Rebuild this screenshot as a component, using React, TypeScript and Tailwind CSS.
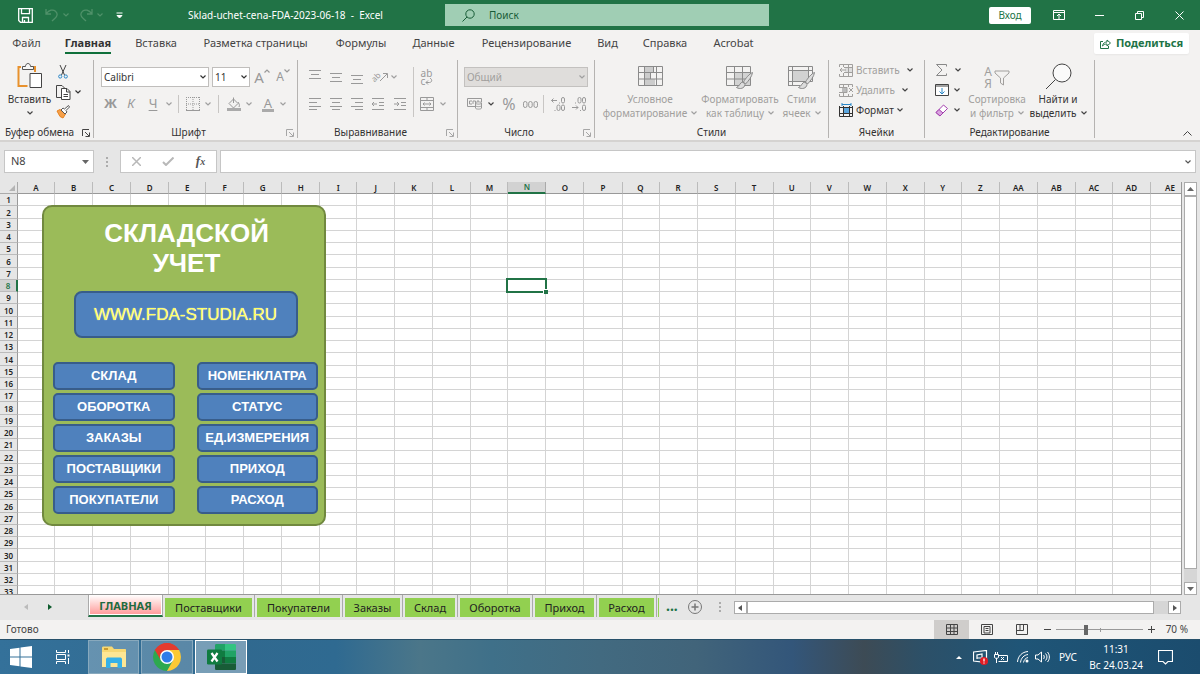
import React from "react";

type IconProps = { className?: string; box?: string; children: React.ReactNode };

function Icon({ className = "size-4", box = "0 0 16 16", children }: IconProps) {
  return (
    <svg className={`${className} shrink-0`} viewBox={box} fill="none" stroke="currentColor" strokeWidth="1" aria-hidden="true">
      {children}
    </svg>
  );
}

function Chevron({ className = "text-[#a0a0a0]" }: { className?: string }) {
  return (
    <svg className={`h-1 w-1.5 shrink-0 ${className}`} viewBox="0 0 6 4" fill="none" stroke="currentColor" strokeWidth="1.2" aria-hidden="true">
      <path d="M.5.5 3 3 5.500.5" />
    </svg>
  );
}

function ToolButton({ label, className, children }: { label: string; className: string; children: React.ReactNode }) {
  return (
    <button type="button" aria-label={label} className={`flex h-5 shrink-0 items-center justify-center ${className}`}>
      {children}
    </button>
  );
}

function Launcher({ dark }: { dark?: boolean }) {
  return (
    <button type="button" aria-label="Параметры группы" className={`absolute right-[3px] top-[3px] ${dark ? "text-[#444]" : "text-[#a6a6a6]"}`}>
      <Icon className="size-2" box="0 0 8 8">
        <path d="M.5 7V.5H7M3 3l4 4M7.500 3.500v4h-4" />
      </Icon>
    </button>
  );
}

function Group({ label, width, launcher, children }: { label: string; width: string; launcher?: "dark" | "light"; children: React.ReactNode }) {
  return (
    <section aria-label={label} className={`flex h-[78px] shrink-0 flex-col border-r border-[#b5b3b1] ${width}`}>
      <div className="flex-1">{children}</div>
      <div className={`relative h-3 text-center text-[10px] leading-3 text-[#333] ${launcher ? "pr-3.5" : ""}`}>
        {label}
        {launcher && <Launcher dark={launcher === "dark"} />}
      </div>
    </section>
  );
}

const VSep = ({ className = "h-5" }: { className?: string }) => <div className={`w-px shrink-0 bg-[#c8c6c4] ${className}`} />;

const tabs = [
  { name: "Файл", width: "w-[53px]" },
  { name: "Главная", width: "w-[70px]" },
  { name: "Вставка", width: "w-[66px]" },
  { name: "Разметка страницы", width: "w-[133px]" },
  { name: "Формулы", width: "w-[78px]" },
  { name: "Данные", width: "w-[67px]" },
  { name: "Рецензирование", width: "w-[119px]" },
  { name: "Вид", width: "w-[43px]" },
  { name: "Справка", width: "w-[72px]" },
  { name: "Acrobat", width: "w-[65px]" },
];

function TitleBar() {
  return (
    <header className="flex h-[30px] shrink-0 items-center bg-[#217346] text-white">
      <div className="flex w-[445px] shrink-0 items-center pl-[18px]">
        <button type="button" aria-label="Сохранить">
          <Icon className="size-[15px]" box="0 0 15 15">
            <path d="M.7.700h13.600v13.600H2.500L.7 12.500zM3.500.7v5h8v-5M4.500 14v-4.500h6V14M6.500 12v2" strokeWidth="1.300" />
          </Icon>
        </button>
        <button type="button" aria-label="Отменить" className="ml-3 flex items-center gap-1 text-[#4f9169]">
          <Icon className="size-[14px]" box="0 0 14 14">
            <path d="M1 1v5h5M1.300 5.700C4 2 8 1 10.500 3.200s2 5-.5 7L7 13" strokeWidth="1.300" />
          </Icon>
          <Chevron className="text-[#4f9169]" />
        </button>
        <button type="button" aria-label="Вернуть" className="ml-2.5 flex items-center gap-1 text-[#4f9169]">
          <Icon className="size-[14px]" box="0 0 14 14">
            <path d="M13 1v5H8M12.700 5.700C10 2 6 1 3.500 3.200s-2 5 .5 7L7 13" strokeWidth="1.300" />
          </Icon>
          <Chevron className="text-[#4f9169]" />
        </button>
        <button type="button" aria-label="Настройка панели" className="ml-[13px]">
          <Icon className="size-[7px]" box="0 0 7 7">
            <path d="M.5 1h6M1 3.500 3.500 6 6 3.500z" fill="currentColor" />
          </Icon>
        </button>
        <h1 className="ml-[65px] whitespace-nowrap text-[10px] leading-4">Sklad-uchet-cena-FDA-2023-06-18&nbsp; -&nbsp; Excel</h1>
      </div>
      <label className="flex h-[22px] w-[324px] shrink-0 items-center gap-3.5 bg-[#a0ceb4] pl-[17px] text-[#185c37]">
        <Icon className="size-[13px]" box="0 0 13 13">
          <circle cx="8" cy="5" r="4.200" />
          <path d="M5 8 .5 12.500" />
        </Icon>
        <input aria-label="Поиск" placeholder="Поиск" className="w-full bg-transparent text-[10px] outline-none placeholder:text-[#185c37]" />
      </label>
      <div className="flex flex-1 items-center justify-end">
        <button type="button" className="h-[17px] w-[42px] rounded-xs bg-white text-[10px] text-[#217346]">Вход</button>
        <button type="button" aria-label="Параметры ленты" className="ml-[22px]">
          <Icon className="h-[10px] w-3" box="0 0 12 10">
            <path d="M.5.500h11v9H.5zM.5 2.500h11M6 9V4M4 6l2-2 2 2" />
          </Icon>
        </button>
        <button type="button" aria-label="Свернуть" className="ml-[30px]">
          <Icon className="size-[9px]" box="0 0 9 9"><path d="M0 4.500h9" /></Icon>
        </button>
        <button type="button" aria-label="Восстановить" className="ml-[31px]">
          <Icon className="size-[9px]" box="0 0 9 9"><path d="M.5 2.500h6v6h-6zM2.500 2.500v-2h6v6h-2" /></Icon>
        </button>
        <button type="button" aria-label="Закрыть" className="ml-[31px] mr-[16px]">
          <Icon className="size-[9px]" box="0 0 9 9"><path d="m.5.500 8 8m0-8-8 8" /></Icon>
        </button>
      </div>
    </header>
  );
}

function Tabs() {
  return (
    <nav className="flex h-[29px] shrink-0 items-start pt-[3px] text-[11px] text-[#444]">
      {tabs.map((t) => (
        <a key={t.name} href="#" className={`flex shrink-0 justify-center whitespace-nowrap ${t.width}`}>
          {t.name === "Главная" ? (
            <span className="border-b-2 border-[#0f703b] font-bold leading-[19px] text-[#333]">{t.name}</span>
          ) : (
            <span className="leading-[19px]">{t.name}</span>
          )}
        </a>
      ))}
      <button type="button" className="ml-auto mr-[11px] flex h-[21px] w-[95px] items-center justify-center gap-[5px] rounded-xs bg-white text-[11px] font-bold text-[#217346] shadow-xs">
        <Icon className="size-[11px]" box="0 0 11 11">
          <path d="M3 3.500H.5v7h8V8M2.500 8C3 5 5 4 7 4V2l3.500 3L7 8V6C5 6 4 6.500 2.500 8z" />
        </Icon>
        Поделиться
      </button>
    </nav>
  );
}

function Lines({ rows }: { rows: [number, number, number][] }) {
  return (
    <Icon className="size-[14px]" box="0 0 14 14">
      {rows.map(([x, y, w], i) => (
        <path key={i} d={`M${x} ${y}.500h${w}`} />
      ))}
    </Icon>
  );
}

function ClipboardGroup() {
  return (
    <Group label="Буфер обмена" width="w-[94px]" launcher="dark">
      <div className="flex pl-[7px] pt-[2px]">
        <button type="button" className="flex w-[45px] flex-col items-center text-[10px] leading-[15px] text-[#333]">
          <Icon className="size-[27px]" box="0 0 27 27">
            <path d="M5 5H2.500v19h9M19 10V5h-4" stroke="#e8912d" strokeWidth="2" />
            <path d="M6.500 7.500v-3h3c0-4 5-4 5 0h3v3z" fill="#f6f6f6" stroke="#555" />
            <path d="M14 11.500h11.500v14H14z" fill="#fff" stroke="#444" />
          </Icon>
          <span className="mt-[3px]">Вставить</span>
          <span className="flex h-3 items-center"><Chevron className="text-[#444]" /></span>
        </button>
        <div className="flex flex-col pl-[3px]">
          <ToolButton label="Вырезать" className="w-4">
            <Icon className="h-[14px] w-[10px]" box="0 0 10 14">
              <path d="m2 0 4.500 10M8 0 3.500 10" stroke="#444" />
              <circle cx="2.200" cy="11.500" r="1.600" stroke="#2b88c8" />
              <circle cx="7.800" cy="11.500" r="1.600" stroke="#2b88c8" />
            </Icon>
          </ToolButton>
          <ToolButton label="Копировать" className="w-[27px] gap-1">
            <Icon className="size-[15px]" box="0 0 15 15">
              <path d="M5 12.500H.5v-12H6l2.500 2.500" stroke="#444" />
              <path d="M5.500 3.500H11l3 3v8H5.500zM10.500 3.500V7H14M7.500 9.500h4.500M7.500 11.500h4.500" fill="#fff" stroke="#444" />
            </Icon>
            <Chevron className="text-[#333]" />
          </ToolButton>
          <ToolButton label="Формат по образцу" className="w-4">
            <Icon className="size-[14px]" box="0 0 14 14">
              <path d="m1 6 3-1.500L9.500 9 7 13 4 11.500z" fill="#f5a04a" stroke="#e8821e" />
              <path d="M5 5 7 3l1.500 1L12.500.5 13.500 2 10 5.500 11 7 9 9z" fill="#fff" stroke="#555" />
            </Icon>
          </ToolButton>
        </div>
      </div>
    </Group>
  );
}

function FontGroup() {
  return (
    <Group label="Шрифт" width="w-[204px]" launcher="light">
      <div className="flex items-center gap-[3px] pl-[7px] pt-[7px]">
        <label className="relative flex w-[108px] items-center">
          <select aria-label="Шрифт" className="h-5 w-full appearance-none border border-[#c0bebc] bg-white pl-0.5 text-[10px] text-[#333]">
            <option>Calibri</option>
          </select>
          <span className="absolute right-[3px] flex"><Chevron className="text-[#333]" /></span>
        </label>
        <label className="relative flex w-[38px] items-center">
          <select aria-label="Размер шрифта" className="h-5 w-full appearance-none border border-[#c0bebc] bg-white pl-0.5 text-[10px] text-[#333]">
            <option>11</option>
          </select>
          <span className="absolute right-[3px] flex"><Chevron className="text-[#333]" /></span>
        </label>
        <button type="button" aria-label="Увеличить размер" className="flex w-[18px] justify-center text-[15px] leading-4 text-[#999]">
          A<Chevron className="rotate-180 text-[#999]" />
        </button>
        <button type="button" aria-label="Уменьшить размер" className="flex w-[18px] justify-center text-[12px] leading-4 text-[#999]">
          A<Chevron className="text-[#999]" />
        </button>
      </div>
      <div className="flex items-center pl-[7px] pt-[7px] text-[13px] text-[#999]">
        <ToolButton label="Полужирный" className="w-[19px] font-bold">Ж</ToolButton>
        <ToolButton label="Курсив" className="w-[22px] italic">К</ToolButton>
        <ToolButton label="Подчеркнутый" className="w-[22px] underline underline-offset-2">Ч</ToolButton>
        <ToolButton label="Вид подчеркивания" className="w-2.5"><Chevron /></ToolButton>
        <VSep className="mx-1 h-[18px]" />
        <ToolButton label="Границы" className="w-5">
          <Icon className="size-[14px]" box="0 0 14 14">
            <path d="M0 .5h14M.5 0v13M13.500 0v13M7 0v13M0 7h14" strokeDasharray="1 1" />
            <path d="M0 13.500h14" />
          </Icon>
        </ToolButton>
        <ToolButton label="Вид границ" className="w-2.5"><Chevron /></ToolButton>
        <VSep className="mx-[5px] h-[18px]" />
        <ToolButton label="Цвет заливки" className="w-5">
          <Icon className="size-[14px]" box="0 0 14 14">
            <path d="M2 6.500 6.500 2l4.500 4.500-4.500 4.500zM6.500 6V.500M11 5c1 1.500 2 3 1 5" />
            <path d="M0 11h14v3H0z" fill="#aaa" stroke="none" />
          </Icon>
        </ToolButton>
        <ToolButton label="Выбор заливки" className="w-2.5"><Chevron /></ToolButton>
        <ToolButton label="Цвет шрифта" className="ml-1 w-5">
          <span className="border-b-[3px] border-[#aaa] px-0.5 leading-3">A</span>
        </ToolButton>
        <ToolButton label="Выбор цвета" className="w-2.5"><Chevron /></ToolButton>
      </div>
    </Group>
  );
}

function AlignGroup() {
  return (
    <Group label="Выравнивание" width="w-[160px]" launcher="light">
      <div className="flex pl-[6px] pt-[7px] text-[#999]">
        <div className="w-[106px]">
          <div className="flex">
            <ToolButton label="По верхнему краю" className="w-[21px]"><Lines rows={[[1, 0, 12], [3, 4, 8], [1, 8, 12]]} /></ToolButton>
            <ToolButton label="По середине" className="w-[21px]"><Lines rows={[[1, 3, 12], [3, 7, 8], [1, 11, 12]]} /></ToolButton>
            <ToolButton label="По нижнему краю" className="w-[21px]"><Lines rows={[[1, 5, 12], [3, 9, 8], [1, 13, 12]]} /></ToolButton>
            <ToolButton label="Ориентация" className="ml-[3px] w-7">
              <span className="-rotate-45 text-[8px] leading-2">ab</span>
              <Icon className="size-2" box="0 0 8 8"><path d="M0 8 7 1M3 .5h4.500V5" /></Icon>
              <span className="ml-[3px] flex"><Chevron /></span>
            </ToolButton>
          </div>
          <div className="mt-[7px] flex">
            <ToolButton label="По левому краю" className="w-[21px]"><Lines rows={[[1, 1, 12], [1, 5, 8], [1, 9, 12], [1, 12, 8]]} /></ToolButton>
            <ToolButton label="По центру" className="w-[21px]"><Lines rows={[[1, 1, 12], [3, 5, 8], [1, 9, 12], [3, 12, 8]]} /></ToolButton>
            <ToolButton label="По правому краю" className="w-[21px]"><Lines rows={[[1, 1, 12], [5, 5, 8], [1, 9, 12], [5, 12, 8]]} /></ToolButton>
            <ToolButton label="Уменьшить отступ" className="w-[22px]">
              <Icon className="size-[14px]" box="0 0 14 14"><path d="M1 1.500h12M8 5.500h5M8 8.500h5M1 12.500h12M6 7H1M3 5 1 7l2 2" /></Icon>
            </ToolButton>
            <ToolButton label="Увеличить отступ" className="w-[21px]">
              <Icon className="size-[14px]" box="0 0 14 14"><path d="M1 1.500h12M8 5.500h5M8 8.500h5M1 12.500h12M1 7h5M4 5l2 2-2 2" /></Icon>
            </ToolButton>
          </div>
        </div>
        <VSep className="mx-[3px] h-[50px]" />
        <div>
          <ToolButton label="Перенести текст" className="w-5">
            <span className="flex flex-col items-start text-[10px] leading-[8px]">
              <span>ab</span>
              <span className="flex items-center">
                c
                <Icon className="h-[7px] w-2" box="0 0 8 7"><path d="M5 0c3 2 1.500 4.500-.5 4.500H1M3 2.500l-2 2 2 2" /></Icon>
              </span>
            </span>
          </ToolButton>
          <ToolButton label="Объединить" className="mt-[7px] w-[31px] gap-1.5">
            <Icon className="size-[14px]" box="0 0 14 14"><path d="M.5.500h13v13H.5zM.5 3.500h13M.5 10.500h13M7 0v3.500M7 10.500V14M3 7h8M4.500 5.500 3 7l1.500 1.500M9.500 5.500 11 7 9.500 8.500" /></Icon>
            <Chevron />
          </ToolButton>
        </div>
      </div>
    </Group>
  );
}

function NumberGroup() {
  return (
    <Group label="Число" width="w-[137px]" launcher="light">
      <div className="pl-[6px] pt-[7px]">
        <label className="relative flex w-[124px] items-center">
          <select aria-label="Числовой формат" className="h-5 w-full appearance-none border border-[#c3c1bf] bg-[#dfdddb] pl-0.5 text-[10px] text-[#a19f9d]">
            <option>Общий</option>
          </select>
          <span className="absolute right-[3px] flex"><Chevron /></span>
        </label>
      </div>
      <div className="flex items-center pl-[8px] pt-[7px] text-[#999]">
        <ToolButton label="Денежный формат" className="w-[28px] gap-[5px]">
          <Icon className="h-3 w-4" box="0 0 16 12">
            <path d="M8 8.500H.5v-8h14V4M5 3H2.500v3H5M6 6V3h2.500v3M10 3h2" />
            <path d="M8.500 5c0-1.500 6-1.500 6 0v5c0 1.500-6 1.500-6 0zM8.500 5c0 1.500 6 1.500 6 0M8.500 7.500c0 1.500 6 1.500 6 0" fill="#f3f2f1" />
          </Icon>
          <Chevron className="text-[#444]" />
        </ToolButton>
        <ToolButton label="Процентный формат" className="ml-0.5 w-[26px] text-[16px]">%</ToolButton>
        <ToolButton label="Формат с разделителями" className="w-4">
          <Icon className="h-[7px] w-[15px]" box="0 0 15 7">
            <rect x=".5" y=".5" width="3.500" height="6" rx="1.700" />
            <rect x="5.700" y=".5" width="3.500" height="6" rx="1.700" />
            <rect x="11" y=".5" width="3.500" height="6" rx="1.700" />
          </Icon>
        </ToolButton>
        <VSep className="mx-[5px] h-[18px]" />
        <ToolButton label="Увеличить разрядность" className="w-[18px]">
          <Icon className="size-[14px]" box="0 0 14 14">
            <path d="M6 3.500H.5M2.500 1.500l-2 2 2 2M8 6h1" />
            <rect x="10.500" y=".5" width="3" height="5.500" rx="1.500" />
            <rect x="6" y="8" width="3" height="5.500" rx="1.500" />
            <rect x="10.500" y="8" width="3" height="5.500" rx="1.500" />
            <path d="M3.500 13.500h1" />
          </Icon>
        </ToolButton>
        <ToolButton label="Уменьшить разрядность" className="ml-[3px] w-[18px]">
          <Icon className="size-[14px]" box="0 0 14 14">
            <path d="M0 10.500h6M4 8.500l2 2-2 2M8 13.500h1M3 6h1" />
            <rect x="10.500" y=".5" width="3" height="5.500" rx="1.500" />
            <rect x="6" y=".5" width="3" height="5.500" rx="1.500" />
            <rect x="10.500" y="8" width="3" height="5.500" rx="1.500" />
          </Icon>
        </ToolButton>
      </div>
    </Group>
  );
}

function BigButton({ width, lines, dark, children }: { width: string; lines: [string, string]; dark?: boolean; children: React.ReactNode }) {
  return (
    <button type="button" className={`flex shrink-0 flex-col items-center whitespace-nowrap text-[10px] leading-[14px] ${width} ${dark ? "text-[#333]" : "text-[#a19f9d]"}`}>
      <span className={dark ? "flex h-[29px] items-start" : "flex h-[29px] items-start pt-[3px]"}>{children}</span>
      <span>{lines[0]}</span>
      <span className="flex items-center gap-1">{lines[1]}<Chevron className={dark ? "text-[#444]" : "text-[#a0a0a0]"} /></span>
    </button>
  );
}

const brush = <path d="M26.500 6.500c-3 1-7 6-9 9.500l2 2c3-3 6.500-7.500 7-11.500zM17 16c-3 0-3 4-6.500 5.500 3.500 2 8 1 8.500-3z" fill="#dcdcdc" stroke="#888" />;

function StylesGroup() {
  return (
    <Group label="Стили" width="w-[234px]">
      <div className="flex pl-[5px] pt-[3px] text-[#999]">
        <BigButton width="w-[100px]" lines={["Условное", "форматирование"]}>
          <Icon className="h-5 w-[25px] text-[#8a8a8a]" box="0 0 25 20">
            <path d="M7 1h9v6H7zM7 7h6v6H7zM7 13h10v6H7z" fill="#ccc" stroke="none" />
            <path d="M.5.500h24v19H.5zM0 6.500h25M0 13h25M6.500 0v20M18.500 0v20M15.500 0v6.500M12.500 6.500V13" />
          </Icon>
        </BigButton>
        <BigButton width="w-[80px]" lines={["Форматировать", "как таблицу"]}>
          <Icon className="h-6 w-7 text-[#8a8a8a]" box="0 0 28 24">
            <path d="M8 7h17v12H8z" fill="#d2d2d2" stroke="none" />
            <path d="M.5.500h24v19H.5zM0 6.500h25M0 13h25M8.500 0v20M16.500 0v20" />
            {brush}
          </Icon>
        </BigButton>
        <BigButton width="w-[43px]" lines={["Стили", "ячеек"]}>
          <Icon className="h-6 w-7 text-[#8a8a8a]" box="0 0 28 24">
            <path d="M5 5h16v10H5z" fill="#d2d2d2" stroke="none" />
            <path d="M.5.500h24v15H.5zM0 4.500h25M4.500 0v20M20.500 0v12M0 19.500h12M.5 15v5" />
            {brush}
          </Icon>
        </BigButton>
      </div>
    </Group>
  );
}

function CellsGroup() {
  return (
    <Group label="Ячейки" width="w-[96px]">
      <div className="flex flex-col items-start pl-[10px] text-[10px] text-[#a19f9d]">
        <button type="button" className="flex h-5 items-center gap-[3px]">
          <Icon className="h-[13px] w-[14px]" box="0 0 14 13">
            <path d="M6 4h7v4H6z" fill="#ddd" stroke="none" />
            <path d="M.5 3V.500h13v12H.5V10M4.500 0v3M9.500 0v13M5 3.500h9M5 8.500h9M4.500 9v4M7 6H1M3 4 1 6l2 2" />
          </Icon>
          Вставить<span className="ml-1 flex"><Chevron className="text-[#444]" /></span>
        </button>
        <button type="button" className="flex h-5 items-center gap-[3px]">
          <Icon className="h-[13px] w-[14px]" box="0 0 14 13">
            <path d="M3 4h5v4H3z" fill="#bbb" stroke="none" />
            <path d="M13.500 3V.500H.5V3M.5 10v2.500h13V10M4.500 0v3M9.500 0v3M0 3.500h8v5H0M4.500 9v4M9.500 10v3M10 4l4 4m0-4-4 4" />
          </Icon>
          Удалить<span className="ml-1 flex"><Chevron className="text-[#444]" /></span>
        </button>
        <button type="button" className="flex h-5 items-center gap-[3px] text-[#333]">
          <Icon className="size-[14px]" box="0 0 14 14">
            <path d="M4 5h7v5H4z" fill="#5ba7e0" stroke="none" />
            <path d="M.5 3v10.500h13V3M0 4.500h14M0 10.500h14M4.500 3v11M10.500 3v11" />
            <path d="M3 1.500h9M3 0v3M12 0v3" stroke="#2b88c8" />
          </Icon>
          Формат<Chevron className="text-[#444]" />
        </button>
      </div>
    </Group>
  );
}

function EditGroup() {
  return (
    <Group label="Редактирование" width="w-[170px]">
      <div className="flex">
        <div className="w-[42px] pl-[10px] text-[#888]">
          <ToolButton label="Сумма" className="w-[25px] gap-[7px]">
            <Icon className="h-3 w-[13px]" box="0 0 13 12"><path d="M11.500 2.500v-2h-10L7 6l-5.500 5.500h10v-2" /></Icon>
            <Chevron className="text-[#444]" />
          </ToolButton>
          <ToolButton label="Заполнить" className="w-[25px] gap-[5px]">
            <Icon className="h-3 w-[14px]" box="0 0 14 12">
              <path d="M.5.500h13v11H.5zM.5 2h13" stroke="#444" fill="#fff" />
              <path d="M7 4v6M4.500 7.500 7 10l2.500-2.500" stroke="#2b88c8" />
            </Icon>
            <Chevron className="text-[#444]" />
          </ToolButton>
          <ToolButton label="Очистить" className="w-[25px] gap-[5px]">
            <Icon className="h-[13px] w-[14px]" box="0 0 14 13">
              <path d="M1 8.500 8.500 1l4 3.500L5 12z" fill="#fff" stroke="#a33fae" />
              <path d="M1 8.500 4 5.500l4 3.500-3 3z" fill="#d9a5df" stroke="#a33fae" />
            </Icon>
            <Chevron className="text-[#444]" />
          </ToolButton>
        </div>
        <div className="flex pt-[3px] text-[#999]">
          <BigButton width="w-[60px]" lines={["Сортировка", "и фильтр"]}>
            <span className="flex items-center gap-0.5">
              <span className="flex flex-col text-[12px] leading-3">
                <span>А</span>
                <span>Я</span>
              </span>
              <Icon className="size-4" box="0 0 16 16"><path d="M1 1h14v2L9.500 8v7l-3-2V8L1 3z" /></Icon>
            </span>
          </BigButton>
          <BigButton width="w-[62px]" lines={["Найти и", "выделить"]} dark>
            <Icon className="size-[27px] text-[#444]" box="0 0 27 27">
              <circle cx="17" cy="10" r="9" fill="#fafafa" />
              <path d="M10.500 16.500 1 26" />
            </Icon>
          </BigButton>
        </div>
      </div>
    </Group>
  );
}

function FormulaBar() {
  return (
    <div className="flex shrink-0 items-center border-t-2 border-[#d5d3d1] bg-[#e6e6e6] px-1 pb-[9px] pt-[8px]">
      <div className="flex h-[23px] w-[90px] items-center border border-[#c6c6c6] bg-white pl-1.5 pr-1">
        <input aria-label="Имя ячейки" defaultValue="N8" className="w-full min-w-0 text-[11px] text-[#444] outline-none" />
        <button type="button" aria-label="Список имен">
          <Icon className="h-1 w-[7px] text-[#666]" box="0 0 7 4"><path d="M0 0h7L3.500 4z" fill="currentColor" stroke="none" /></Icon>
        </button>
      </div>
      <Icon className="mx-[11px] h-2.5 w-1 text-[#999]" box="0 0 4 10"><path d="M2 0v2M2 4v2M2 8v2" strokeWidth="1.500" /></Icon>
      <div className="flex h-[23px] w-[97px] items-center justify-around border border-[#c6c6c6] bg-white">
        <button type="button" aria-label="Отмена"><Icon className="size-[9px] text-[#b8b8b8]" box="0 0 9 9"><path d="m0 0 9 9m0-9L0 9" strokeWidth="1.500" /></Icon></button>
        <button type="button" aria-label="Ввод"><Icon className="h-[9px] w-3 text-[#b8b8b8]" box="0 0 12 9"><path d="m1 5 3 3 7.500-7.500" strokeWidth="2" /></Icon></button>
        <button type="button" aria-label="Вставить функцию" className="font-['Liberation_Serif',serif] text-[13px] font-bold italic leading-4 text-[#555]">
          f<span className="text-[10px]">x</span>
        </button>
      </div>
      <div className="ml-[3px] flex h-[23px] flex-1 items-center border border-[#c6c6c6] bg-white px-1">
        <input aria-label="Строка формул" className="w-full text-[11px] outline-none" />
        <Chevron className="text-[#555]" />
      </div>
    </div>
  );
}

const letters = "ABCDEFGHIJKLMNOPQRSTUVWXYZ".split("");
const columns = [...letters, "AA", "AB", "AC", "AD", "AE"];
const rowNumbers = Array.from({ length: 33 }, (_, i) => i + 1);

function headClass(c: string) {
  if (c === "N") return "border-b-2 border-r border-b-[#217346] border-r-[#aaa] bg-[#d2d2d2] p-0 font-semibold leading-[10px] text-[#217346]";
  if (c === "AE") return "border-b border-b-[#999] p-0 pl-2 font-semibold";
  return "border-b border-r border-b-[#999] border-r-[#bbb] p-0 font-semibold";
}

const menu = [
  "СКЛАД", "НОМЕНКЛАТРА",
  "ОБОРОТКА", "СТАТУС",
  "ЗАКАЗЫ", "ЕД.ИЗМЕРЕНИЯ",
  "ПОСТАВЩИКИ", "ПРИХОД",
  "ПОКУПАТЕЛИ", "РАСХОД",
];

function MenuPanel() {
  return (
    <div className="absolute left-[42px] top-[23px] w-[284px] rounded-[10px] border-2 border-[#71893f] bg-[#9bbb59] pb-[10px] pl-[9px] pr-[6px] pt-[11px] font-['Liberation_Sans',Arial,sans-serif]">
      <h2 className="pl-0.5 text-center text-[26px] font-bold leading-[30px] text-white">СКЛАДСКОЙ<br />УЧЕТ</h2>
      <a href="#" className="mx-auto mt-[13px] flex h-[47px] w-[224px] items-center justify-center rounded-lg border-2 border-[#385d8a] bg-[#4f81bd] text-[17px] text-[#ffff66] [text-shadow:0_0_1px_#fff]">
        WWW.FDA-STUDIA.RU
      </a>
      <div className="mt-6 grid grid-cols-2 gap-x-[22px] gap-y-[3px]">
        {menu.map((m) => (
          <button key={m} type="button" className="h-7 whitespace-nowrap rounded-[5px] border-2 border-[#385d8a] bg-[#4f81bd] text-[13px] font-bold text-white">
            {m}
          </button>
        ))}
      </div>
    </div>
  );
}

function Sheet() {
  return (
    <main className="flex min-h-0 flex-1 bg-[#e6e6e6]">
      <div className="relative min-w-0 flex-1 overflow-hidden border-b border-r border-[#999]">
        <table className="w-full table-fixed border-separate border-spacing-0 bg-white text-[8px] leading-[11px] text-[#222]">
          <colgroup>
            <col className="w-[18px]" />
            {columns.map((c, i) => (
              <col key={c} className={c === "AE" ? "w-[30px]" : i % 4 === 0 ? "w-[37px]" : "w-[38px]"} />
            ))}
          </colgroup>
          <thead>
            <tr className="h-3 bg-[#e6e6e6]">
              <th className="border-b border-r border-[#aaa] p-0">
                <Icon className="ml-auto mr-0.5 size-[6px] text-[#b4b4b4]" box="0 0 6 6"><path d="M6 0v6H0z" fill="currentColor" stroke="none" /></Icon>
              </th>
              {columns.map((c) => (
                <th key={c} scope="col" className={headClass(c)}>
                  {c}
                </th>
              ))}
            </tr>
          </thead>
          <tbody>
            {rowNumbers.map((r) => (
              <tr key={r} className={r % 4 === 2 ? "h-[13px]" : "h-3"}>
                <th scope="row" className={r === 8 ? "border-b border-r-2 border-b-[#bbb] border-r-[#217346] bg-[#d2d2d2] p-0 font-semibold text-[#217346]" : "border-b border-r border-b-[#bbb] border-r-[#999] bg-[#e6e6e6] p-0 font-semibold"}>
                  {r}
                </th>
                {columns.map((c) => (
                  <td key={c} className={r === 8 && c === "N" ? "relative border-b border-r border-[#d4d4d4] p-0" : c === "AE" ? "border-b border-[#d4d4d4] p-0" : "border-b border-r border-[#d4d4d4] p-0"}>
                    {r === 8 && c === "N" && (
                      <div className="absolute -inset-x-0.5 -inset-y-0.5 border-2 border-[#217346]">
                        <div className="absolute -bottom-[3px] -right-[3px] size-[5px] border-l border-t border-white bg-[#217346]" />
                      </div>
                    )}
                  </td>
                ))}
              </tr>
            ))}
          </tbody>
        </table>
        <MenuPanel />
      </div>
      <div className="flex w-[18px] flex-col pl-0.5 pr-[3px]">
        <button type="button" aria-label="Вверх" className="flex h-[14px] items-center justify-center border border-[#ababab] bg-white">
          <Icon className="h-1 w-[7px] text-[#666]" box="0 0 7 4"><path d="M0 4h7L3.500 0z" fill="currentColor" stroke="none" /></Icon>
        </button>
        <div className="flex-1 bg-[#d6d6d6] pb-[13px]"><div className="h-full border border-[#ababab] bg-white" /></div>
        <button type="button" aria-label="Вниз" className="flex h-[13px] items-center justify-center border border-[#ababab] bg-white">
          <Icon className="h-1 w-[7px] text-[#666]" box="0 0 7 4"><path d="M0 0h7L3.500 4z" fill="currentColor" stroke="none" /></Icon>
        </button>
      </div>
    </main>
  );
}

const sheets = [
  { name: "Поставщики", width: "w-[92px]" },
  { name: "Покупатели", width: "w-[88px]" },
  { name: "Заказы", width: "w-[60px]" },
  { name: "Склад", width: "w-[55px]" },
  { name: "Оборотка", width: "w-[75px]" },
  { name: "Приход", width: "w-[64px]" },
  { name: "Расход", width: "w-[60px]" },
];

function SheetTabs() {
  return (
    <div className="flex h-[25px] shrink-0 bg-[#e6e6e6] text-[11px]">
      <div className="flex w-[88px] items-center gap-[20px] pb-0.5 pl-[24px]">
        <button type="button" aria-label="Предыдущие листы"><Icon className="h-1.5 w-1 text-[#bbb]" box="0 0 4 6"><path d="M4 0v6L0 3z" fill="currentColor" stroke="none" /></Icon></button>
        <button type="button" aria-label="Следующие листы"><Icon className="h-1.5 w-1 text-[#0f5c2e]" box="0 0 4 6"><path d="M0 0v6l4-3z" fill="currentColor" stroke="none" /></Icon></button>
      </div>
      <button type="button" className="h-[22px] w-[75px] border-x border-b-2 border-x-[#aaa] border-b-[#217346] bg-white px-px pb-px">
        <span className="block h-full bg-linear-to-b from-white to-[#ff9c9c] font-bold leading-[22px] text-[#1d6b3f]">ГЛАВНАЯ</span>
      </button>
      {sheets.map((s) => (
        <button key={s.name} type="button" className={`flex h-[22px] border-r border-[#aaa] pl-[2px] pr-0.5 pt-[3px] ${s.width}`}>
          <span className="block h-[19px] flex-1 bg-[#92d050] text-center leading-[19px] text-[#222]">{s.name}</span>
        </button>
      ))}
      <div className="mt-[3px] h-[19px] w-0.5 border-r border-[#92d050]" />
      <button type="button" aria-label="Другие листы" className="ml-[7px] pb-1 text-[14px] font-bold text-[#217346]">...</button>
      <button type="button" aria-label="Новый лист" className="ml-2.5 pb-0.5 text-[#777]">
        <Icon className="size-[14px]" box="0 0 14 14"><circle cx="7" cy="7" r="6.500" /><path d="M7 3.500v7M3.500 7h7" strokeWidth="1.500" /></Icon>
      </button>
      <Icon className="ml-4 mt-[7px] h-2.5 w-1 text-[#999]" box="0 0 4 10"><path d="M2 0v2M2 4v2M2 8v2" strokeWidth="1.500" /></Icon>
      <div className="ml-3 mr-[19px] mt-1.5 flex h-[13px] flex-1">
        <button type="button" aria-label="Влево" className="flex w-[13px] items-center justify-center border border-[#ababab] bg-white">
          <Icon className="h-1.5 w-1 text-[#555]" box="0 0 4 6"><path d="M4 0v6L0 3z" fill="currentColor" stroke="none" /></Icon>
        </button>
        <div className="flex-1 bg-[#d6d6d6] pr-[14px]"><div className="h-full border border-[#ababab] bg-white" /></div>
        <button type="button" aria-label="Вправо" className="flex w-[13px] items-center justify-center border border-[#ababab] bg-white">
          <Icon className="h-1.5 w-1 text-[#555]" box="0 0 4 6"><path d="M0 0v6l4-3z" fill="currentColor" stroke="none" /></Icon>
        </button>
      </div>
    </div>
  );
}

function StatusBar() {
  return (
    <div className="flex h-[19px] shrink-0 items-center bg-[#f3f2f1] text-[10px] text-[#444]">
      <span className="pl-1.5">Готово</span>
      <div className="ml-auto flex h-full items-center">
        <button type="button" aria-label="Обычный" className="flex h-full w-[35px] items-center justify-center bg-[#cfcdcb]">
          <Icon className="h-[11px] w-3" box="0 0 12 11"><path d="M.5.500h11v10H.5zM4.500 0v11M8 0v11M0 4h12M0 7.500h12" /></Icon>
        </button>
        <button type="button" aria-label="Разметка страницы" className="flex w-[35px] justify-center">
          <Icon className="h-[11px] w-3" box="0 0 12 11"><path d="M.5.500h11v10H.5zM3 2.500h6v6.500H3zM4.500 4.500h3M4.500 6.500h3" /></Icon>
        </button>
        <button type="button" aria-label="Страничный режим" className="flex w-[36px] justify-center">
          <Icon className="h-[11px] w-3" box="0 0 12 11"><path d="M.5.500h11v10H.5zM4 0v6.500M7.500 0v6.500M0 6.500h7.500" /></Icon>
        </button>
        <button type="button" aria-label="Уменьшить" className="ml-1"><Icon className="size-[7px]" box="0 0 7 7"><path d="M0 3.500h7" /></Icon></button>
        <div className="relative mx-[5px] flex items-center">
          <input
            type="range"
            aria-label="Масштаб"
            min={10}
            max={190}
            defaultValue={70}
            className="h-px w-[87px] appearance-none bg-[#999] [&::-webkit-slider-thumb]:h-2.5 [&::-webkit-slider-thumb]:w-1 [&::-webkit-slider-thumb]:appearance-none [&::-webkit-slider-thumb]:bg-[#666]"
          />
          <span className="pointer-events-none absolute left-1/2 h-1 w-px bg-[#999]" />
        </div>
        <button type="button" aria-label="Увеличить"><Icon className="size-[7px]" box="0 0 7 7"><path d="M0 3.500h7M3.500 0v7" /></Icon></button>
        <span className="w-[45px] pr-3 text-right">70 %</span>
      </div>
    </div>
  );
}

function Taskbar() {
  return (
    <footer className="flex h-[35px] shrink-0 items-center border-t border-[#27506a] bg-[linear-gradient(90deg,#34719a_0%,#30698f_20%,#2f6a91_28%,#4b7689_35%,#3f7089_41%,#426a80_50%,#41647a_58%,#33567a_66%,#3d4b55_72%,#2c5068_77%,#1f5577_85%,#1b4c6e_100%)] text-white">
      <button type="button" aria-label="Пуск" className="flex w-[42px] justify-center">
        <Icon className="size-[22px]" box="0 0 22 22">
          <path d="M0 3 9.500 1.700v8.800H0zM10.500 1.500 22 0v10.500H10.500zM0 11.500h9.500v8.800L0 19zM10.500 11.500H22V22l-11.500-1.500z" fill="#fff" stroke="none" />
        </Icon>
      </button>
      <button type="button" aria-label="Представление задач" className="flex w-[46px] justify-center pr-1">
        <Icon className="size-[14px]" box="0 0 14 14">
          <path d="M.5 0v2.500h9V0M.5 4.500h9v5h-9zM.5 14v-2.500h9V14M12.500 0v3M12.500 8v6" />
          <path d="M11.500 4.500h2v2h-2z" fill="#fff" stroke="none" />
        </Icon>
      </button>
      <button type="button" aria-label="Проводник" className="flex h-[34px] w-[51px] items-center justify-center border border-[#88a9bd] bg-white/25">
        <Icon className="h-[22px] w-[26px]" box="0 0 26 22">
          <path d="M1 2C1 1 1.500.500 2.500.500H11l2 2.500h11c1 0 1 .5 1 1.500V21H1z" fill="#f7d873" stroke="none" />
          <path d="M1 6h24v15H1z" fill="#fde694" stroke="none" />
          <path d="M3 2h4v2H3z" fill="#c99b2f" stroke="none" />
          <path d="M5 22v-8.500c0-1.500 1-2 2-2h12c1 0 2 .5 2 2V22h-4.500v-5h-7v5z" fill="#35b0e8" stroke="none" />
        </Icon>
      </button>
      <button type="button" aria-label="Chrome" className="ml-0.5 flex h-[34px] w-[52px] items-center justify-center border border-[#88a9bd] bg-white/20">
        <Icon className="size-7" box="0 0 28 28">
          <path d="M14 14 1.900 7A14 14 0 0 1 26.100 7z" fill="#e33b2e" stroke="none" />
          <path d="M14 14v0l6 3.500L14 28A14 14 0 0 1 1.900 7z" fill="#2da94f" stroke="none" />
          <path d="M14 7h12.100A14 14 0 0 1 14 28l6-10.500z" fill="#fcc934" stroke="none" />
          <path d="M1.900 7A14 14 0 0 1 26.100 7H14a7 7 0 0 0-6.100 10.500z" fill="#e33b2e" stroke="none" />
          <circle cx="14" cy="14" r="7" fill="#fff" stroke="none" />
          <circle cx="14" cy="14" r="5.500" fill="#2f7de9" stroke="none" />
        </Icon>
      </button>
      <button type="button" aria-label="Excel" className="ml-0.5 flex h-[34px] w-[52px] items-center justify-center border border-white bg-white/35">
        <Icon className="h-[26px] w-[29px]" box="0 0 29 26">
          <path d="M8 1.500C8 .5 8.500 0 9.500 0H18v6.500H8z" fill="#21a366" stroke="none" />
          <path d="M18 0h9.500c1 0 1.500.5 1.500 1.500v5H18z" fill="#33c481" stroke="none" />
          <path d="M8 6.500h10V13H8z" fill="#107c41" stroke="none" />
          <path d="M18 6.500h11V13H18z" fill="#21a366" stroke="none" />
          <path d="M8 13h10v6.500H8z" fill="#185c37" stroke="none" />
          <path d="M18 13h11v6.500H18z" fill="#107c41" stroke="none" />
          <path d="M8 19.500h21v5c0 1-.5 1.500-1.500 1.500h-18C8.500 26 8 25.500 8 24.500z" fill="#185c37" stroke="none" />
          <rect x="0" y="5.500" width="15" height="15" rx="1.200" fill="#107c41" stroke="none" />
          <path d="m4.500 9 6 8.500m0-8.500-6 8.500" stroke="#fff" strokeWidth="2.200" />
        </Icon>
      </button>
      <div className="ml-auto flex items-center">
        <Icon className="h-[3px] w-1.5" box="0 0 6 3"><path d="M0 3h6L3 0z" fill="#fff" stroke="none" /></Icon>
        <Icon className="ml-[11px] size-[15px]" box="0 0 15 15">
          <path d="M.5 2 13.500.500v12L.5 11zM4 9V5l5-1v4M4 8h4" strokeWidth="1.200" />
          <circle cx="11" cy="11" r="4" fill="#e01b24" stroke="none" />
          <path d="M11 8.500v3M11 12.500v1" strokeWidth="1.300" />
        </Icon>
        <Icon className="ml-[6px] h-[11px] w-[14px]" box="0 0 14 11">
          <path d="M4 3.500h9.500v6H4.500M.5 2.500h4v3c0 1-4 1-4 0zM1.500 0v2.500M3.500 0v2.500M2.500 6v5M7 5l3 3m0-3L7 8" />
        </Icon>
        <Icon className="ml-[9px] size-3" box="0 0 12 12">
          <path d="M.5 11C1 5 5 1 11 .500M3.500 11.500C4 7 7 4 11 3.500M6.500 11.500C7 9 8.500 7 11 6.500" />
          <circle cx="10" cy="10" r="1.500" fill="#fff" stroke="none" />
        </Icon>
        <Icon className="ml-[6px] h-3 w-[15px]" box="0 0 15 12">
          <path d="M.5 4v4h2.500l3.500 3V1L3 4zM8.500 4c1 1 1 3 0 4M10.500 2.500c2 2 2 5 0 7M12.500 1c2.500 3 2.500 7 0 10" />
        </Icon>
        <span className="ml-[9px] w-5 text-[10px]">РУС</span>
        <time className="ml-[9px] w-[56px] text-center text-[10px] leading-4">11:31<br /><span className="whitespace-nowrap">Вс 24.03.24</span></time>
        <button type="button" aria-label="Уведомления" className="ml-[14px] mr-[27px]">
          <Icon className="size-[15px]" box="0 0 15 15"><path d="M.5.500h14v11H10l-2.500 2.500L5 11.500H.5z" strokeWidth="1.200" /></Icon>
        </button>
      </div>
    </footer>
  );
}

export default function App() {
  return (
    <div className="flex h-screen flex-col overflow-hidden bg-[#f3f2f1] font-['Noto_Sans','Open_Sans',sans-serif]">
      <TitleBar />
      <Tabs />
      <div className="flex shrink-0 pb-[2px] pt-px">
        <ClipboardGroup />
        <FontGroup />
        <AlignGroup />
        <NumberGroup />
        <StylesGroup />
        <CellsGroup />
        <EditGroup />
        <button type="button" aria-label="Свернуть ленту" className="ml-auto mr-2 self-end pb-0.5 text-[#444]">
          <Icon className="h-[5px] w-[9px]" box="0 0 9 5"><path d="M.5 4.500l4-4 4 4" /></Icon>
        </button>
      </div>
      <FormulaBar />
      <Sheet />
      <SheetTabs />
      <StatusBar />
      <Taskbar />
    </div>
  );
}
